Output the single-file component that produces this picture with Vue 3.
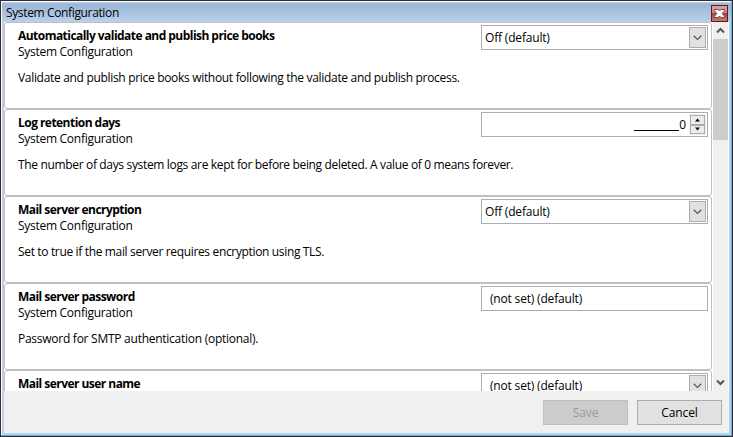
<script setup>
const settings = [
  { name: 'Automatically validate and publish price books', text: 'Validate and publish price books without following the validate and publish process.', type: 'select', value: 'Off (default)', tracking: -0.315 },
  { name: 'Log retention days', text: 'The number of days system logs are kept for before being deleted. A value of 0 means forever.', type: 'number', value: '0', tracking: -0.34 },
  { name: 'Mail server encryption', text: 'Set to true if the mail server requires encryption using TLS.', type: 'select', value: 'Off (default)', tracking: -0.345 },
  { name: 'Mail server password', text: 'Password for SMTP authentication (optional).', type: 'text', value: '(not set) (default)', tracking: -0.26 },
  { name: 'Mail server user name', text: '', type: 'select', value: '(not set) (default)', indent: true, tracking: 0 },
]
</script>

<template>
  <div class="window">
    <header class="titlebar">
      <span class="caption">System Configuration</span>
      <button class="close" aria-label="Close">
        <svg width="15" height="15" viewBox="0 0 15 15">
          <path d="M2.500 3.500H6L7.500 5 9 3.500h3.500v1.300L10.200 7.500l2.300 2.700v1.300H9L7.500 10 6 11.500H2.500v-1.300L4.800 7.500 2.500 4.800z" fill="#fff" stroke="#5a5560" stroke-width="1" />
        </svg>
      </button>
    </header>
    <main class="body">
      <div class="list">
        <section v-for="s in settings" :key="s.name" class="card">
          <div class="info">
            <div class="name">{{ s.name }}</div>
            <template v-if="s.text">
              <div class="group">System Configuration</div>
              <div class="desc" :style="{ letterSpacing: s.tracking + 'px' }">{{ s.text }}</div>
            </template>
          </div>
          <div class="field" :class="[s.type, { indent: s.indent }]">
            <template v-if="s.type === 'number'">
              <span class="blank"></span><span class="digit">{{ s.value }}</span>
              <span class="spin">
                <span><svg width="7" height="4" viewBox="0 0 7 4"><path d="M1 3.500h5L3.500 0.500z" fill="#000" /></svg></span>
                <span><svg width="7" height="4" viewBox="0 0 7 4"><path d="M1 0.500h5L3.500 3.500z" fill="#000" /></svg></span>
              </span>
            </template>
            <template v-else>
              <span class="value">{{ s.value }}</span>
              <span v-if="s.type === 'select'" class="drop">
                <svg width="9" height="6" viewBox="0 0 9 6"><path d="M0.700 0.800L4.500 4.500 8.300 0.800" fill="none" stroke="#555" stroke-width="1.200" /></svg>
              </span>
            </template>
          </div>
        </section>
      </div>
      <div class="scroll">
        <span class="arrow"><svg width="9" height="7" viewBox="0 0 9 7"><path d="M1 5.500L4.500 2 8 5.500" fill="none" stroke="#555" stroke-width="2" /></svg></span>
        <div class="thumb"></div>
        <span class="arrow last"><svg width="9" height="7" viewBox="0 0 9 7"><path d="M1 1.500L4.500 5 8 1.500" fill="none" stroke="#555" stroke-width="2" /></svg></span>
      </div>
    </main>
    <footer class="footer">
      <button class="btn disabled">Save</button>
      <button class="btn">Cancel</button>
    </footer>
  </div>
</template>

<style>
body { margin: 0; overflow: hidden; }
</style>
<style scoped>
* { box-sizing: border-box; }
.window {
  width: 733px; height: 437px; display: flex; flex-direction: column;
  border: 1px solid #302c32; padding: 1px 0 0 1px; background: #fff;
  box-shadow: inset -1px -1px 0 #4db9e6;
  font: 12px/16px "Open Sans", "Noto Sans", sans-serif; color: #000; white-space: nowrap;
}
.titlebar {
  height: 20px; flex: none; margin-right: 1px; padding: 0 3px 0 4px;
  display: flex; justify-content: space-between;
  background: linear-gradient(#b4cae5 0, #b4cae5 1px, #9ab5d5 2px, #b9d1ea 20px);
}
.caption { padding-top: 3px; letter-spacing: -0.36px; }
.close {
  width: 17px; height: 17px; margin-top: 3px; padding: 0; border: 1px solid #5a1c26; display: flex;
  background: linear-gradient(#e2a198, #d08478 45%, #b53a2c 50%, #d3786a);
}
.body {
  height: 369px; flex: none; display: flex; margin-right: 1px;
  border-left: 2px solid #bfcde5; border-right: 2px solid #b9d1ea;
}
.list { width: 709px; overflow: hidden; padding-right: 1px; }
.card {
  height: 87px; border: 1px solid #c0c0c0; border-radius: 3px;
  padding: 2px 3px 0 13px; display: flex; justify-content: space-between;
}
.info { width: 0; padding-top: 3px; letter-spacing: -0.28px; }
.name { font-weight: 700; letter-spacing: -0.54px; }
.desc { margin-top: 10px; }
.field {
  width: 227px; height: 25px; flex: none; border: 1px solid #abadb3; padding: 1px 1px 1px 3px;
  display: flex; align-items: center; letter-spacing: -0.18px;
}
.text, .indent { padding-left: 8px; }
.value { flex: 1; }
.drop {
  width: 17px; height: 21px; border: 1px solid #adadad; background: #e1e1e1;
  display: flex; align-items: center; justify-content: center;
}
.number { justify-content: flex-end; }
.blank { width: 45px; height: 1px; background: #000; margin-top: 12px; }
.spin { width: 17px; height: 21px; margin-left: 3px; padding: 1px; background: #f0f0f0; display: flex; flex-direction: column; }
.spin span { flex: 1; border: 1px solid #acacac; background: #ececec; display: flex; align-items: center; justify-content: center; }
.scroll { width: 15px; margin-right: 1px; background: #f0f0f0; display: flex; flex-direction: column; }
.arrow { height: 17px; display: flex; align-items: center; justify-content: center; }
.arrow.last { margin-top: auto; }
.thumb { height: 101px; background: #cdcdcd; }
.footer {
  height: 44px; flex: none; margin-right: 1px; padding: 9px 7px 0 0; display: flex; justify-content: flex-end; gap: 9px;
  background: #f0f0f0; border: 2px solid #b9d1ea; border-top: 0; border-left-color: #bfcde5;
}
.btn {
  width: 85px; height: 25px; padding: 0; border: 1px solid #adadad; background: #e1e1e1;
  font: inherit; color: #000; letter-spacing: -0.1px;
}
.disabled { background: #ccc; border-color: #bfbfbf; color: #9b9b9b; }
</style>
